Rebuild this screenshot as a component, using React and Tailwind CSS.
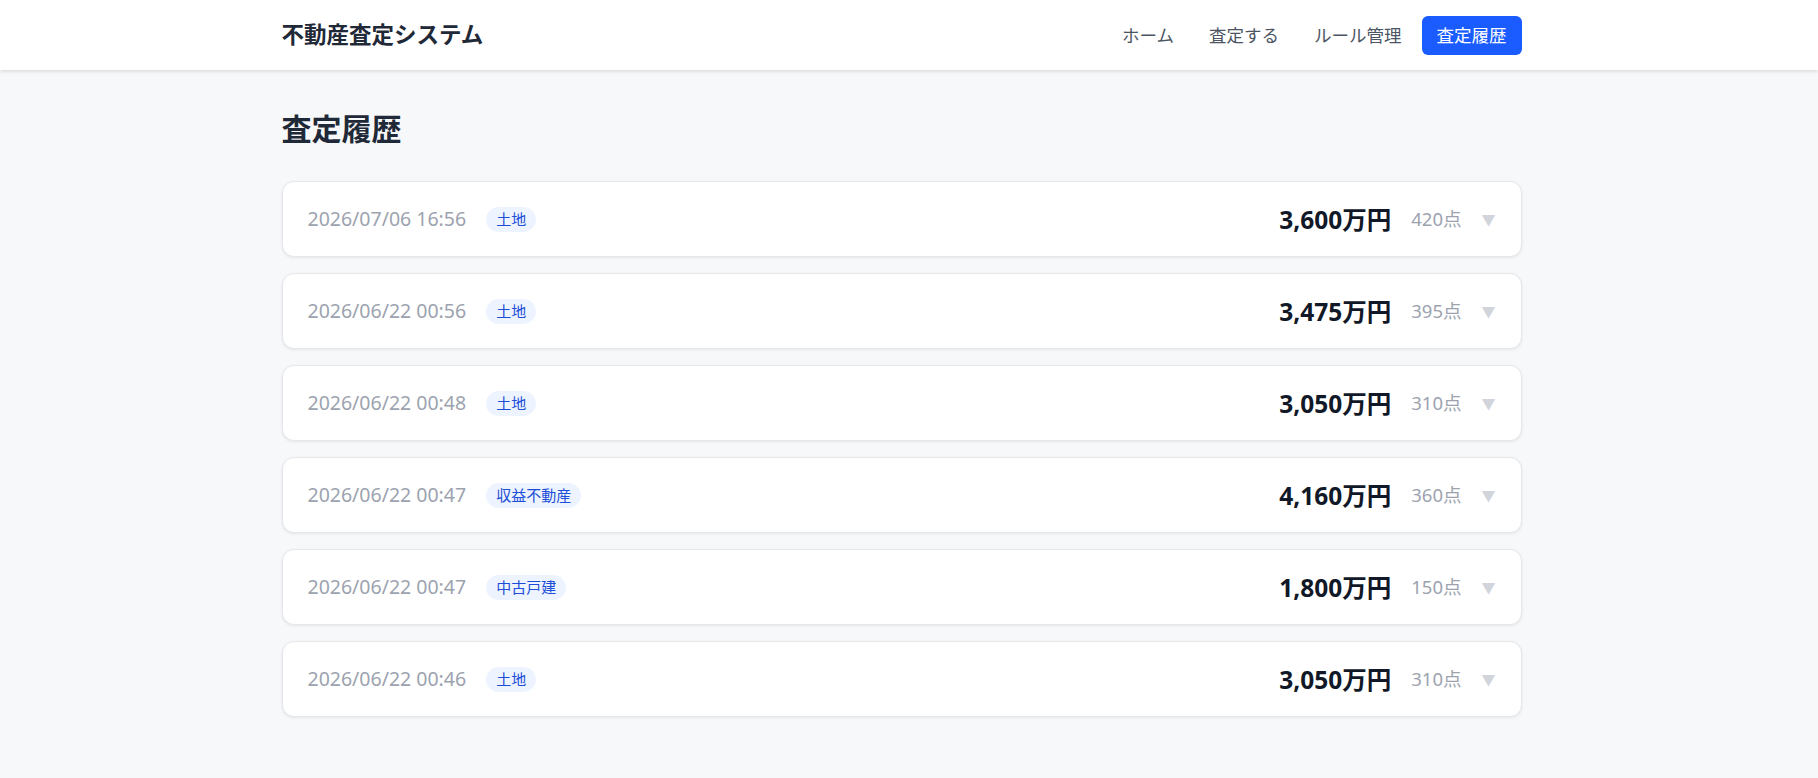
import React from 'react';

const history = [
  { date: '2026/07/06 16:56', type: '土地', price: '3,600万円', score: '420点' },
  { date: '2026/06/22 00:56', type: '土地', price: '3,475万円', score: '395点' },
  { date: '2026/06/22 00:48', type: '土地', price: '3,050万円', score: '310点' },
  { date: '2026/06/22 00:47', type: '収益不動産', price: '4,160万円', score: '360点' },
  { date: '2026/06/22 00:47', type: '中古戸建', price: '1,800万円', score: '150点' },
  { date: '2026/06/22 00:46', type: '土地', price: '3,050万円', score: '310点' },
];

const navItems = ['ホーム', '査定する', 'ルール管理'];

const HistoryRow = ({ item }) => (
  <div className="flex h-[76px] items-center justify-between rounded-[12px] border border-[#e5e7eb] bg-white px-[25px] shadow-[0_1px_3px_rgba(0,0,0,0.08)]">
    <div className="flex items-center gap-5">
      <span className="text-[19.5px] text-[#9ca3af]">{item.date}</span>
      <span className="rounded-full bg-[#eef4ff] px-[10px] py-[2px] text-[15px] leading-[21px] text-[#1d4ed8]">
        {item.type}
      </span>
    </div>
    <div className="flex items-center gap-5">
      <span className="text-[24.5px] font-bold leading-[35px] text-[#111827]">{item.price}</span>
      <span className="text-[18.5px] text-[#9ca3af]">{item.score}</span>
      <span className="text-[14px] text-[#d1d5db]">▼</span>
    </div>
  </div>
);

export default function App() {
  return (
    <div
      className="min-h-screen bg-[#f7f8fa] pr-[15px]"
      style={{ fontFamily: '"Noto Sans", "Noto Sans CJK JP", sans-serif' }}
    >
      <header className="relative -mr-[15px] bg-white pr-[15px] shadow-[0_2px_3px_rgba(0,0,0,0.1)]">
        <div className="mx-auto flex h-[70px] max-w-[1240px] items-center justify-between">
          <h1 className="text-[22.5px] font-bold text-[#1f2937]">不動産査定システム</h1>
          <nav className="flex items-center gap-[5px]">
            {navItems.map((label) => (
              <a key={label} className="px-[15px] py-[7px] text-[17.5px] leading-[25px] text-[#4b5563]">
                {label}
              </a>
            ))}
            <a className="rounded-[6px] bg-[#1a5cff] px-[15px] py-[7px] text-[17.5px] leading-[25px] text-white">
              査定履歴
            </a>
          </nav>
        </div>
      </header>

      <main className="mx-auto max-w-[1240px] pt-[39px] pb-10">
        <h2 className="mb-[32px] text-[30px] font-bold leading-[40px] text-[#1f2937]">査定履歴</h2>
        <div className="flex flex-col gap-4">
          {history.map((item, i) => (
            <HistoryRow key={i} item={item} />
          ))}
        </div>
      </main>
    </div>
  );
}
